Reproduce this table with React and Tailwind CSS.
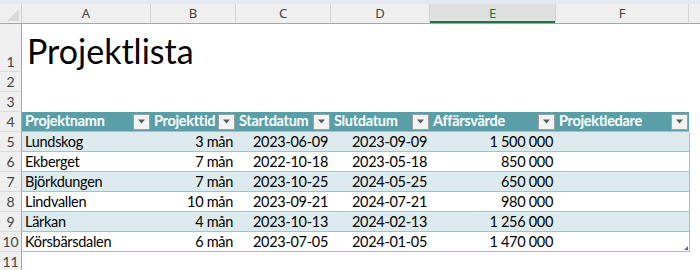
import { Fragment } from "react";

const cols = [
  { key: "A", w: "w-[129px]" },
  { key: "B", w: "w-[85px]" },
  { key: "C", w: "w-[95px]" },
  { key: "D", w: "w-[99px]" },
  { key: "E", w: "w-[126px]" },
  { key: "F", w: "w-[133px]" },
];

const headers = ["Projektnamn", "Projekttid", "Startdatum", "Slutdatum", "Affärsvärde", "Projektledare"];

const projekt = [
  ["Lundskog", "3 mån", "2023-06-09", "2023-09-09", "1 500 000"],
  ["Ekberget", "7 mån", "2022-10-18", "2023-05-18", "850 000"],
  ["Björkdungen", "7 mån", "2023-10-25", "2024-05-25", "650 000"],
  ["Lindvallen", "10 mån", "2023-09-21", "2024-07-21", "980 000"],
  ["Lärkan", "4 mån", "2023-10-13", "2024-02-13", "1 256 000"],
  ["Körsbärsdalen", "6 mån", "2023-07-05", "2024-01-05", "1 470 000"],
];

const cellFont = "font-['Lato',sans-serif] text-[14.5px] tracking-[-0.3px]";

function RowHead({ n, h = "h-[20px]" }) {
  return (
    <div className={`${h} w-[22px] shrink-0 flex items-end justify-center border-r border-[#a6a6a6] border-b border-b-[#dadada] bg-[#efefef] font-['Lato',sans-serif] text-[14px] leading-[19px] text-[#444]`}>
      {n}
    </div>
  );
}

function FilterButton() {
  return (
    <div className="ml-auto mr-[1px] flex h-[16px] w-[17px] shrink-0 items-center justify-center border border-[#a0a0a0] bg-[#f3f3f3]">
      <svg width="9" height="5" viewBox="0 0 9 5">
        <path d="M1 0.5 L8 0.5 L4.5 4.5 Z" fill="#5a5a5a" />
      </svg>
    </div>
  );
}

export default function App() {
  return (
    <div className="h-[270px] w-[700px] overflow-hidden bg-white">
      {/* window strip above the sheet */}
      <div className="h-[4px] bg-[#e6e8ef]" />

      {/* column letters */}
      <div className="flex h-[20px] border-b border-[#a6a6a6] bg-[#efefef] font-['Noto_Sans',sans-serif] text-[13px] text-[#444]">
        <div className="relative w-[22px] shrink-0 border-r border-[#cfcfcf]">
          <svg className="absolute bottom-[2px] right-[2px]" width="12" height="12" viewBox="0 0 12 12">
            <path d="M12 0 L12 12 L0 12 Z" fill="#d9d9d9" />
          </svg>
        </div>
        {cols.map((c) => (
          <div
            key={c.key}
            className={`${c.w} shrink-0 flex items-center justify-center border-r border-[#d4d4d4] ${
              c.key === "E" ? "bg-[#e0e0e0] text-[#1e7145] shadow-[inset_0_-2px_0_#217346]" : ""
            }`}
          >
            {c.key}
          </div>
        ))}
        <div className="flex-1" />
      </div>

      {/* row 1: title */}
      <div className="flex">
        <RowHead n={1} h="h-[48px]" />
        <div className="flex items-end pb-[4px] pl-[5px] font-['Lato',sans-serif] text-[34px] leading-none text-black">
          Projektlista
        </div>
      </div>
      <div className="flex">
        <RowHead n={2} />
      </div>
      <div className="flex">
        <RowHead n={3} />
      </div>

      {/* table header */}
      <div className="flex">
        <RowHead n={4} />
        <div className="flex h-[20px] border-b border-[#9cc4ca] bg-[#5a9fa8]">
          {cols.map((c, i) => (
            <div key={c.key} className={`${c.w} shrink-0 flex items-center pl-[3px] ${cellFont} font-bold text-white`}>
              <span className="leading-none">{headers[i]}</span>
              <FilterButton />
            </div>
          ))}
        </div>
      </div>

      {/* table body */}
      {projekt.map((p, r) => (
        <div key={p[0]} className="flex">
          <RowHead n={r + 5} />
          <div
            className={`relative flex h-[20px] border-b border-r border-[#9cc4ca] ${
              r % 2 === 0 ? "bg-[#ddebee]" : "bg-white"
            } ${cellFont} leading-[19px] text-black`}
          >
            {cols.map((c, i) => (
              <div key={c.key} className={`${c.w} shrink-0 px-[3px] ${i === 0 ? "text-left" : "text-right"} ${i === 5 ? "w-[132px]" : ""}`}>
                {p[i] ?? ""}
              </div>
            ))}
            {r === projekt.length - 1 && (
              <svg className="absolute bottom-[1px] right-[1px]" width="4" height="4" viewBox="0 0 4 4">
                <path d="M4 0 L4 4 L0 4 Z" fill="#4a67b8" />
              </svg>
            )}
          </div>
        </div>
      ))}
      <div className="flex">
        <RowHead n={11} />
      </div>
    </div>
  );
}
